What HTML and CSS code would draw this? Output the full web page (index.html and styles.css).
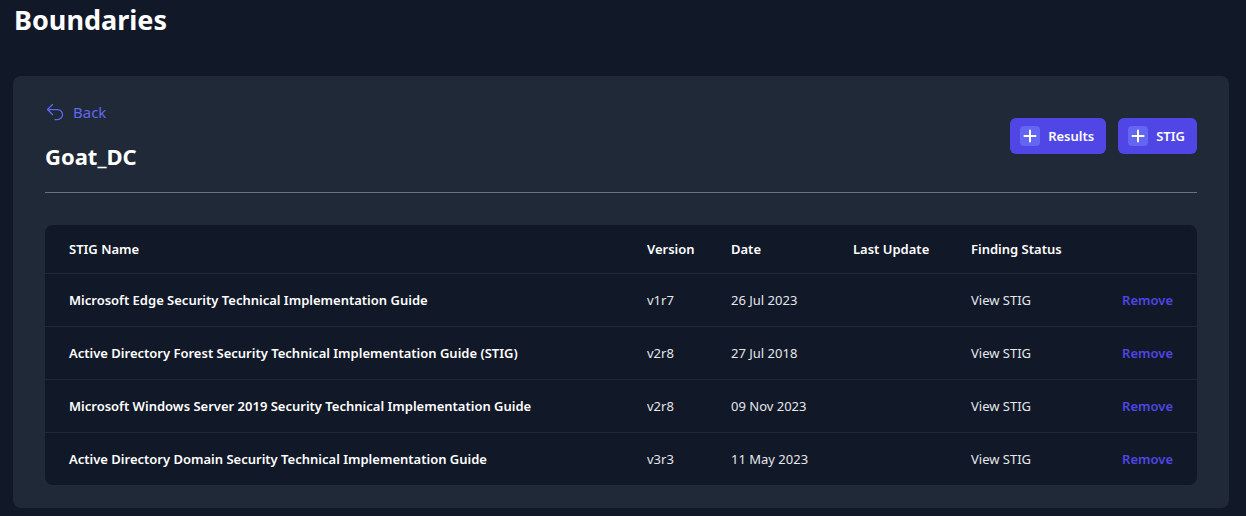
FILE: index.html
```html
<!DOCTYPE html>
<html>
<head>
<meta charset="utf-8">
<link rel="stylesheet" href="styles.css">
</head>
<body>
<div class="page">
  <h1 class="page-title">Boundaries</h1>
  <section class="card">
    <div class="card-head">
      <div class="head-left">
        <a class="back" href="#">
          <svg class="back-icon" viewBox="0 0 24 24" fill="none" stroke="currentColor" stroke-width="1.5" stroke-linecap="round" stroke-linejoin="round"><path d="M9 15 3 9m0 0 6-6M3 9h12a6 6 0 0 1 0 12h-3"/></svg>
          <span>Back</span>
        </a>
        <h2 class="title">Goat_DC</h2>
      </div>
      <div class="actions">
        <button class="btn"><span class="plus"><svg viewBox="0 0 20 20" fill="none" stroke="currentColor" stroke-width="2" stroke-linecap="round"><path d="M10 4.5v11M4.5 10h11"/></svg></span>Results</button>
        <button class="btn"><span class="plus"><svg viewBox="0 0 20 20" fill="none" stroke="currentColor" stroke-width="2" stroke-linecap="round"><path d="M10 4.5v11M4.5 10h11"/></svg></span>STIG</button>
      </div>
    </div>
    <hr class="divider">
    <div class="table">
      <div class="row head">
        <div class="cell">STIG Name</div>
        <div class="cell">Version</div>
        <div class="cell">Date</div>
        <div class="cell">Last Update</div>
        <div class="cell">Finding Status</div>
        <div class="cell"></div>
      </div>
      <div class="row">
        <div class="cell name">Microsoft Edge Security Technical Implementation Guide</div>
        <div class="cell">v1r7</div>
        <div class="cell">26 Jul 2023</div>
        <div class="cell"></div>
        <div class="cell">View STIG</div>
        <div class="cell remove">Remove</div>
      </div>
      <div class="row">
        <div class="cell name">Active Directory Forest Security Technical Implementation Guide (STIG)</div>
        <div class="cell">v2r8</div>
        <div class="cell">27 Jul 2018</div>
        <div class="cell"></div>
        <div class="cell">View STIG</div>
        <div class="cell remove">Remove</div>
      </div>
      <div class="row">
        <div class="cell name">Microsoft Windows Server 2019 Security Technical Implementation Guide</div>
        <div class="cell">v2r8</div>
        <div class="cell">09 Nov 2023</div>
        <div class="cell"></div>
        <div class="cell">View STIG</div>
        <div class="cell remove">Remove</div>
      </div>
      <div class="row">
        <div class="cell name">Active Directory Domain Security Technical Implementation Guide</div>
        <div class="cell">v3r3</div>
        <div class="cell">11 May 2023</div>
        <div class="cell"></div>
        <div class="cell">View STIG</div>
        <div class="cell remove">Remove</div>
      </div>
    </div>
  </section>
</div>
</body>
</html>
```

FILE: styles.css
```css
* { box-sizing: border-box; }
html, body {
  margin: 0;
  background: #111827;
  color: #fff;
  font-family: "Noto Sans", "Open Sans", sans-serif;
}
.page {
  padding: 0 17px 0 13px;
}
.page-title {
  margin: 0 0 0 1px;
  font-size: 27px;
  line-height: 40px;
  font-weight: 700;
  height: 76px;
}
.card {
  background: #1f2937;
  border-radius: 8px;
  padding: 24px 32px 23px;
}
.card-head {
  display: flex;
  align-items: center;
  justify-content: space-between;
}
.head-left {
  display: flex;
  flex-direction: column;
}
.back {
  display: flex;
  align-items: center;
  gap: 8px;
  color: #6366f1;
  text-decoration: none;
  font-size: 15px;
  line-height: 24px;
}
.back-icon {
  width: 20px;
  height: 20px;
}
.title {
  margin: 16px 0 0;
  font-size: 22px;
  line-height: 32px;
  font-weight: 700;
}
.actions {
  display: flex;
  gap: 12px;
}
.btn {
  display: flex;
  align-items: center;
  gap: 8px;
  height: 36px;
  padding: 0 12px 0 10px;
  border: none;
  border-radius: 6px;
  background: #4f46e5;
  color: #fff;
  font-family: inherit;
  font-size: 13px;
  font-weight: 600;
}
.plus {
  display: flex;
  align-items: center;
  justify-content: center;
  width: 20px;
  height: 20px;
  border-radius: 4px;
  background: #6366f1;
}
.plus svg {
  width: 20px;
  height: 20px;
}
.divider {
  margin: 20px 0 32px;
  border: none;
  border-top: 1px solid #6b7280;
}
.table {
  background: #111827;
  border-radius: 8px;
  font-size: 13px;
}
.row {
  display: grid;
  grid-template-columns: 578px 84px 122px 118px 1fr auto;
  align-items: center;
  height: 53px;
  border-top: 1px solid #1f2937;
}
.row.head {
  height: 48px;
  border-top: none;
  font-weight: 600;
}
.cell {
  padding-left: 24px;
  color: #e5e7eb;
  white-space: nowrap;
}
.row.head .cell { color: #fff; }
.cell:last-child { padding-right: 24px; }
.name {
  font-weight: 600;
  color: #fff;
}
.remove {
  color: #4f46e5;
  font-weight: 600;
}
```
